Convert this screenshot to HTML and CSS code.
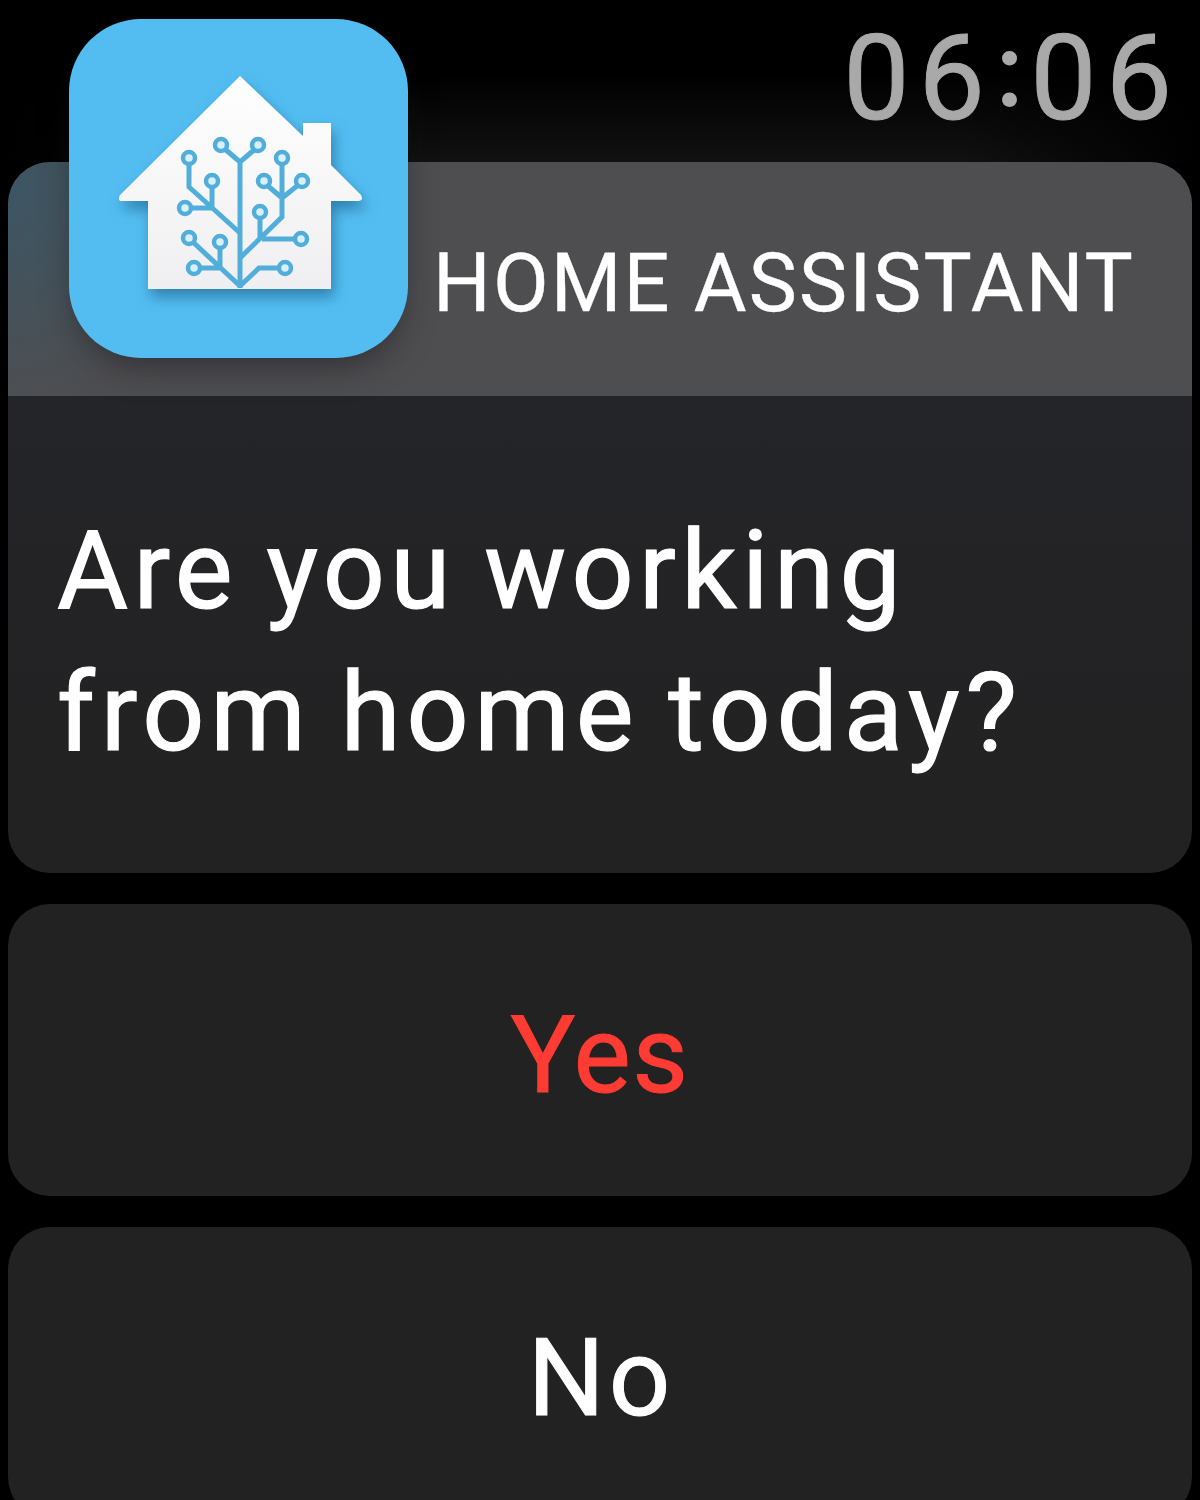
FILE: index.html
```html
<!DOCTYPE html>
<html lang="en">
<head>
<meta charset="utf-8">
<title>Home Assistant</title>
<link rel="stylesheet" href="styles.css">
</head>
<body>
<main class="screen">
  <div class="status"><time class="clock">06<span class="colon">:</span>06</time></div>
  <article class="card">
    <header class="card-header">
      <svg class="app-icon" viewBox="69 19 339 339" role="img" aria-label="Home Assistant">
        <defs>
          <linearGradient id="wall" x1="0" y1="0" x2="0" y2="1">
            <stop offset="0" stop-color="#fff"/>
            <stop offset="1" stop-color="#efeff1"/>
          </linearGradient>
        </defs>
        <path class="house" fill="url(#wall)" d="M240 76 L303 136 V123 H331 V165 L361 195 Q364 201 358 201 H331 V289 H148 V201 H122 Q117 201 120 195 Z"/>
        <g class="tree">
          <path d="M240 288 V162 M226 150 L240 162 L254 150"/>
          <path d="M189 165 V187 L240 233 M212 187 V207 M191 208 H212"/>
          <path d="M282 165 V217 L240 258 M268 186 L282 198 L297 186 M260 218 V238 M262 239 H294"/>
          <path d="M194 243 L240 286 M220 248 V266 M201 268 H221"/>
          <path d="M240 286 L259 268 H278"/>
          <circle cx="221" cy="145" r="6"/><circle cx="258" cy="145" r="6"/>
          <circle cx="189" cy="158" r="6"/><circle cx="282" cy="158" r="6"/>
          <circle cx="212" cy="181" r="6"/><circle cx="264" cy="181" r="6"/>
          <circle cx="302" cy="181" r="6"/><circle cx="185" cy="208" r="6"/>
          <circle cx="260" cy="212" r="6"/><circle cx="189" cy="238" r="6"/>
          <circle cx="220" cy="242" r="6"/><circle cx="301" cy="239" r="6"/>
          <circle cx="194" cy="268" r="6"/><circle cx="285" cy="268" r="6"/>
        </g>
      </svg>
      <h1 class="app-name">HOME ASSISTANT</h1>
    </header>
    <p class="message">Are you working<br><span class="last-line">from home today?</span></p>
  </article>
  <button class="action danger">Yes</button>
  <button class="action">No</button>
</main>
</body>
</html>
```
FILE: styles.css
```css
* { box-sizing: border-box; }

body {
  margin: 0;
  background: #000;
  color: #fff;
  font-family: Roboto, "Liberation Sans", sans-serif;
}

.screen {
  display: flex;
  flex-direction: column;
  gap: 31px;
  height: 1500px;
  padding: 0 8px;
  overflow: hidden;
}

.status {
  flex: none;
  height: 162px;
  margin: 0 -8px -31px;
  padding: 9px 19px 0 0;
  background: linear-gradient(to right, #000, transparent 30%, transparent 80%, #000),
    linear-gradient(#000 45%, #111112);
  text-align: right;
}

.clock {
  display: block;
  color: #a9a9a9;
  font-size: 118px;
  line-height: 140px;
  letter-spacing: 9px;
  -webkit-text-stroke: 1px #a9a9a9;
}

.colon {
  display: inline-block;
  line-height: 1;
  vertical-align: 15px;
  font-size: 97px;
  padding-left: 4px;
  -webkit-text-stroke-width: 4px;
}

.card {
  flex: none;
  height: 711px;
  border-radius: 42px;
  background: linear-gradient(#242529 33%, #232325 65%, #222);
}

.card-header {
  display: flex;
  height: 234px;
  padding-left: 61px;
  border-radius: 42px 42px 0 0;
  background: radial-gradient(ellipse 180px 230px at 0 20px, #3c5664, transparent), #4e4e51;
}

.app-icon {
  flex: none;
  width: 339px;
  height: 339px;
  margin-top: -143px;
  border-radius: 72px;
  background: #53bdf1;
  box-shadow: 0 14px 34px -8px rgba(20, 20, 25, .55);
}

.house { filter: drop-shadow(3px 8px 7px rgba(20, 80, 120, .55)); }

.tree {
  fill: none;
  stroke: #51aedb;
  stroke-width: 5;
}

.tree circle {
  fill: #d8f0fb;
  stroke-width: 4.5;
}

.app-name {
  margin: 74px 0 0 25px;
  font-size: 81px;
  font-weight: 400;
  line-height: 96px;
  letter-spacing: 2.1px;
  white-space: nowrap;
  -webkit-text-stroke: .4px #fff;
}

.message {
  margin: 0;
  padding: 104px 0 0 49px;
  font-size: 109px;
  line-height: 142px;
  letter-spacing: 5.4px;
  word-spacing: -4px;
  white-space: nowrap;
  -webkit-text-stroke: 1.2px #fff;
}

.last-line { letter-spacing: 5.8px; }

.action {
  flex: none;
  height: 292px;
  padding: 10px 0 0 2px;
  border: 0;
  border-radius: 42px;
  background: #222223;
  color: #fff;
  font: 400 108px/1 Roboto, "Liberation Sans", sans-serif;
  letter-spacing: 4px;
  -webkit-text-stroke: 1px currentColor;
}

.danger {
  padding-left: 0;
  color: #ff3b33;
  letter-spacing: 1.5px;
}
```
